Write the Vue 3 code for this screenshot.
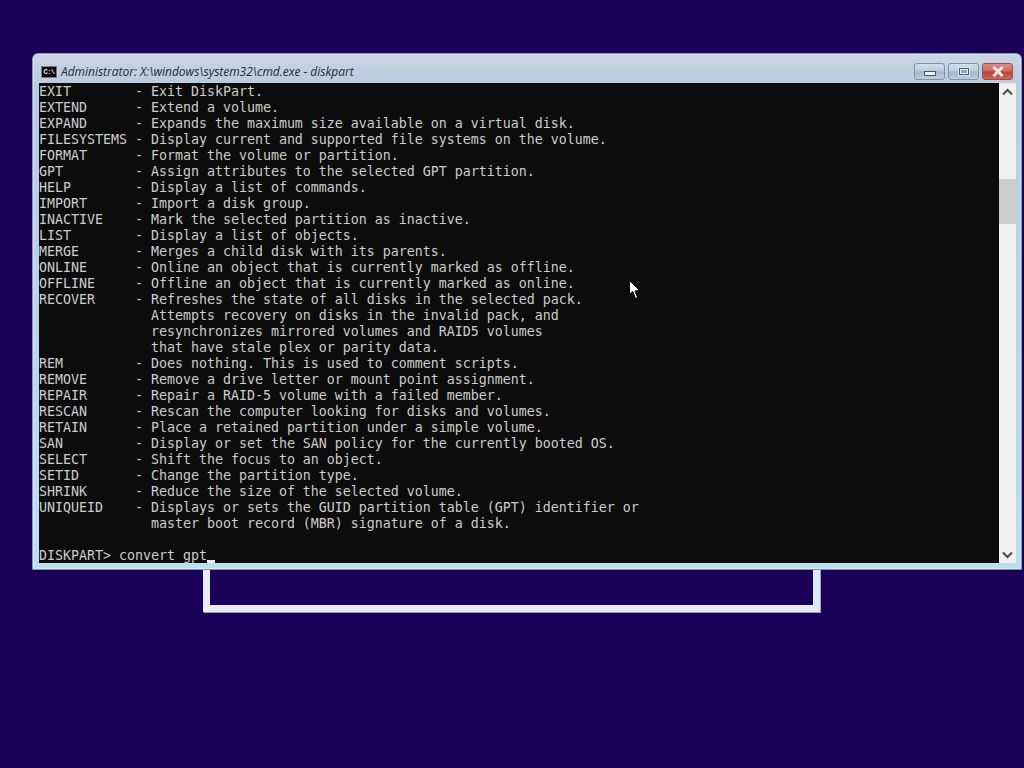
<script setup>
const lines = [
  'EXIT        - Exit DiskPart.',
  'EXTEND      - Extend a volume.',
  'EXPAND      - Expands the maximum size available on a virtual disk.',
  'FILESYSTEMS - Display current and supported file systems on the volume.',
  'FORMAT      - Format the volume or partition.',
  'GPT         - Assign attributes to the selected GPT partition.',
  'HELP        - Display a list of commands.',
  'IMPORT      - Import a disk group.',
  'INACTIVE    - Mark the selected partition as inactive.',
  'LIST        - Display a list of objects.',
  'MERGE       - Merges a child disk with its parents.',
  'ONLINE      - Online an object that is currently marked as offline.',
  'OFFLINE     - Offline an object that is currently marked as online.',
  'RECOVER     - Refreshes the state of all disks in the selected pack.',
  '              Attempts recovery on disks in the invalid pack, and',
  '              resynchronizes mirrored volumes and RAID5 volumes',
  '              that have stale plex or parity data.',
  'REM         - Does nothing. This is used to comment scripts.',
  'REMOVE      - Remove a drive letter or mount point assignment.',
  'REPAIR      - Repair a RAID-5 volume with a failed member.',
  'RESCAN      - Rescan the computer looking for disks and volumes.',
  'RETAIN      - Place a retained partition under a simple volume.',
  'SAN         - Display or set the SAN policy for the currently booted OS.',
  'SELECT      - Shift the focus to an object.',
  'SETID       - Change the partition type.',
  'SHRINK      - Reduce the size of the selected volume.',
  'UNIQUEID    - Displays or sets the GUID partition table (GPT) identifier or',
  '              master boot record (MBR) signature of a disk.',
  ' ',
]
</script>

<template>
  <div class="desktop">
    <div class="frame"></div>
    <div class="window">
      <div class="titlebar">
        <div class="appicon"><span>C:\</span></div>
        <div class="title">Administrator: X:\windows\system32\cmd.exe - diskpart</div>
        <div class="controls">
          <div class="btn"><i class="min"></i></div>
          <div class="btn"><i class="max"></i></div>
          <div class="btn close">
            <svg width="16" height="11" viewBox="0 0 16 11">
              <path d="M3.5 1 L12.5 10 M12.5 1 L3.5 10" stroke="#f3e6df" stroke-width="3" fill="none" />
            </svg>
          </div>
        </div>
      </div>
      <div class="body">
        <div class="console">
          <div v-for="(l, i) in lines" :key="i" class="line">{{ l }}</div>
          <div class="line">DISKPART&gt; convert gpt<span class="cursor"></span></div>
        </div>
        <div class="scrollbar">
          <div class="arrow">
            <svg width="11" height="8" viewBox="0 0 11 8"><path d="M1 6.5 L5.5 2 L10 6.5" stroke="#4a4a4a" stroke-width="2" fill="none" /></svg>
          </div>
          <div class="track"><div class="thumb"></div></div>
          <div class="arrow">
            <svg width="11" height="8" viewBox="0 0 11 8"><path d="M1 1.5 L5.5 6 L10 1.5" stroke="#4a4a4a" stroke-width="2" fill="none" /></svg>
          </div>
        </div>
      </div>
    </div>
    <svg class="pointer" width="12" height="20" viewBox="0 0 12 20">
      <path d="M0.5 0.5 L0.5 14.5 L3.7 11.5 L6.5 18.5 L8.7 17.5 L6 11 L10.5 10.5 Z" fill="#fff" stroke="#000" stroke-width="1" />
    </svg>
  </div>
</template>

<style>
html, body { margin: 0; background: #1a0059; }
</style>

<style scoped>
.desktop {
  position: relative;
  width: 1024px;
  height: 768px;
  overflow: hidden;
  background: #1a0059;
}
.frame {
  position: absolute;
  left: 203px;
  top: 500px;
  width: 603px;
  height: 98px;
  border: 7px solid #e6ebf6;
  border-right-color: #dfe6f4;
  box-shadow: 1px 1px 0 #9aa0c4;
}
.window {
  position: absolute;
  left: 32px;
  top: 53px;
  width: 988px;
  height: 515px;
  display: flex;
  flex-direction: column;
  border: 1px solid #7f95ad;
  border-radius: 6px 6px 0 0;
  background: linear-gradient(180deg, #c9d6e4 0, #b9cbde 30px, #bcdff0 100%);
  box-shadow: inset 0 0 0 1px rgba(255,255,255,.35);
}
.titlebar {
  height: 29px;
  display: flex;
  align-items: center;
  padding-left: 8px;
  flex: none;
}
.appicon {
  width: 16px;
  height: 12px;
  margin-top: 7px;
  background: #0c0c0c;
  border: 1px solid #777;
  box-sizing: border-box;
  display: flex;
  align-items: center;
  justify-content: center;
  overflow: hidden;
}
.appicon span {
  color: #eee;
  font: bold 7px/8px "Liberation Mono", monospace;
  letter-spacing: -0.5px;
}
.title {
  margin-left: 4px;
  margin-top: 7px;
  font: italic 12px/16px "Open Sans", "Noto Sans", sans-serif;
  letter-spacing: -0.02px;
  color: #222b36;
  white-space: nowrap;
}
.controls {
  margin-left: auto;
  margin-right: 8px;
  margin-top: 4px;
  display: flex;
  align-self: flex-start;
  gap: 3px;
  padding-top: 5px;
}
.btn {
  width: 29px;
  height: 15px;
  border: 1px solid #7d93ac;
  border-radius: 3px;
  background: linear-gradient(180deg, #d2dfec 0, #b9cbdd 48%, #a3b7cb 52%, #bccfe0 100%);
  display: flex;
  align-items: center;
  justify-content: center;
}
.btn.close {
  border-color: #9c4e48;
  background: linear-gradient(180deg, #d98d84 0, #cc6a5f 48%, #b8403a 52%, #c96a5e 100%);
}
.min {
  display: block;
  width: 10px;
  height: 3px;
  margin-top: 4px;
  border: 1px solid #48596c;
  background: #eef3f8;
}
.max {
  display: block;
  width: 8px;
  height: 5px;
  border: 1px solid #48596c;
  outline: 1px solid #dfe8f0;
  background: #8ea3b8;
  box-shadow: inset 0 0 0 1px #eef3f8;
}
.body {
  display: flex;
  margin-left: 6px;
  flex: none;
  height: 480px;
}
.console {
  width: 960px;
  height: 480px;
  box-sizing: border-box;
  padding-top: 1px;
  background: #0c0c0c;
  color: #cccccc;
  font: 13.29px/16px "DejaVu Sans Mono", monospace;
  white-space: pre;
  overflow: hidden;
}
.line { height: 16px; position: relative; }
.cursor {
  display: inline-block;
  width: 8px;
  height: 4px;
  background: #e8e8e8;
  vertical-align: -4px;
}
.scrollbar {
  width: 17px;
  height: 480px;
  background: #f0f0f0;
  display: flex;
  flex-direction: column;
}
.arrow {
  height: 17px;
  display: flex;
  align-items: center;
  justify-content: center;
  flex: none;
}
.track {
  flex: 1;
  padding-top: 79px;
}
.thumb {
  height: 45px;
  background: #cdcdcd;
}
.pointer {
  position: absolute;
  left: 628.5px;
  top: 279.5px;
}
</style>
